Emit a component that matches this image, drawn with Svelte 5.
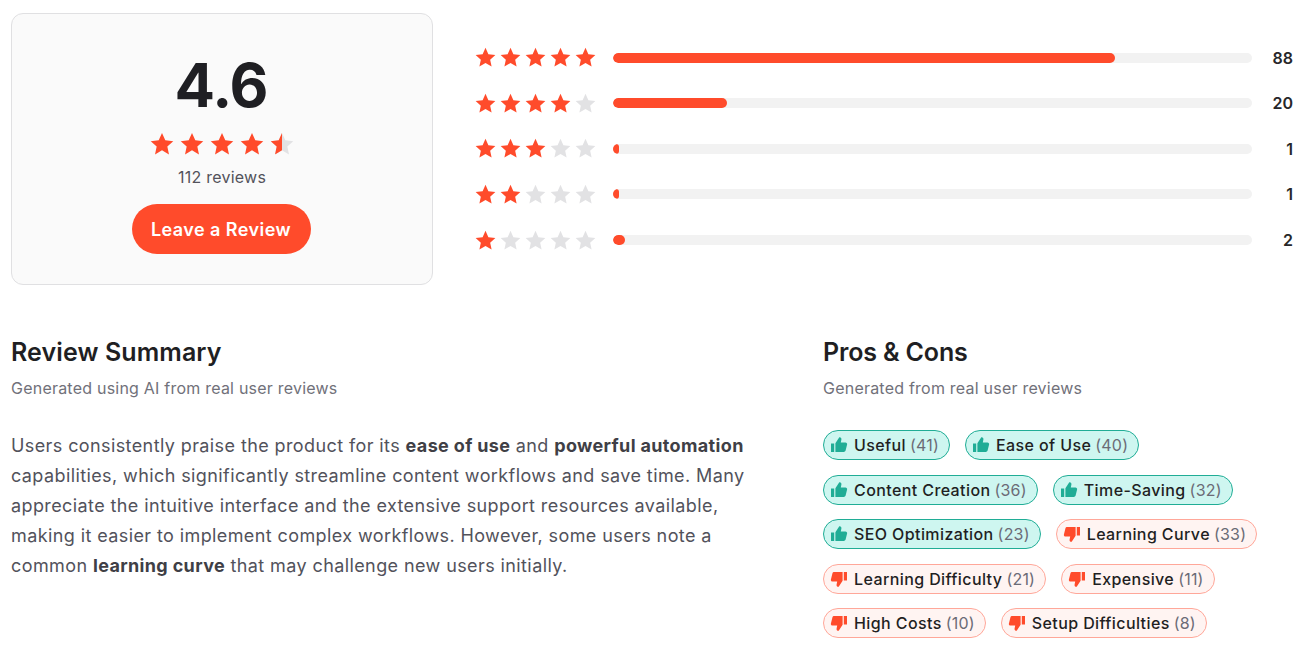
<script>
    const starPath = 'M10 0.8l2.75 6.1 6.65.72-4.96 4.48 1.38 6.55L10 15.3l-5.82 3.35 1.38-6.55L.6 7.62l6.65-.72z';

    const rows = [
        { stars: 5, pct: 78.6, count: 88 },
        { stars: 4, pct: 17.9, count: 20 },
        { stars: 3, pct: 0.9, count: 1 },
        { stars: 2, pct: 0.9, count: 1 },
        { stars: 1, pct: 1.8, count: 2 }
    ];

    const tags = [
        { label: 'Useful', count: 41, pro: true },
        { label: 'Ease of Use', count: 40, pro: true },
        { label: 'Content Creation', count: 36, pro: true },
        { label: 'Time-Saving', count: 32, pro: true },
        { label: 'SEO Optimization', count: 23, pro: true },
        { label: 'Learning Curve', count: 33, pro: false },
        { label: 'Learning Difficulty', count: 21, pro: false },
        { label: 'Expensive', count: 11, pro: false },
        { label: 'High Costs', count: 10, pro: false },
        { label: 'Setup Difficulties', count: 8, pro: false }
    ];
</script>

<div class="page">
    <div class="top">
        <div class="score-card">
            <div class="score">4.6</div>
            <div class="score-stars">
                {#each [0, 1, 2, 3] as i (i)}
                    <svg class="big-star" viewBox="0 0 20 20"><path d={starPath} fill="#ff4b2b" /></svg>
                {/each}
                <svg class="big-star" viewBox="0 0 20 20">
                    <path d={starPath} fill="#e2e2e4" />
                    <path d={starPath} fill="#ff4b2b" style="clip-path: inset(0 50% 0 0)" />
                </svg>
            </div>
            <div class="review-count">112 reviews</div>
            <button class="review-btn">Leave a Review</button>
        </div>

        <div class="breakdown">
            {#each rows as row}
                <div class="row">
                    <div class="row-stars">
                        {#each [1, 2, 3, 4, 5] as n}
                            <svg class="small-star" viewBox="0 0 20 20">
                                <path d={starPath} fill={n <= row.stars ? '#ff4b2b' : '#e2e2e4'} />
                            </svg>
                        {/each}
                    </div>
                    <div class="track"><div class="fill" style="width: {row.pct}%"></div></div>
                    <div class="count">{row.count}</div>
                </div>
            {/each}
        </div>
    </div>

    <div class="bottom">
        <div class="summary">
            <h2>Review Summary</h2>
            <p class="sub">Generated using AI from real user reviews</p>
            <p class="body">
                Users consistently praise the product for its <b>ease of use</b> and <b>powerful automation</b>
                capabilities, which significantly streamline content workflows and save time. Many
                appreciate the intuitive interface and the extensive support resources available,
                making it easier to implement complex workflows. However, some users note a
                common <b>learning curve</b> that may challenge new users initially.
            </p>
        </div>
        <div class="pros">
            <h2>Pros &amp; Cons</h2>
            <p class="sub">Generated from real user reviews</p>
            <div class="tags">
                {#each tags as tag}
                    <span class="tag" class:pro={tag.pro} class:con={!tag.pro}>
                        <svg class="thumb" class:down={!tag.pro} viewBox="0 0 18 18">
                            <path d="M1 7.5h3.2V16H1zM5.4 7.3 9.3 1.2c1.5-.2 2.4.9 2.1 2.3l-.6 2.9h4.6c1.2 0 2 1 1.7 2.2l-1.5 6c-.2.9-1 1.4-1.9 1.4H5.4z" />
                        </svg>
                        <span class="tag-label">{tag.label}</span>
                        <span class="tag-count">({tag.count})</span>
                    </span>
                {/each}
            </div>
        </div>
    </div>
</div>

<style>
    :global(body) {
        background: #fff;
        font-family: 'Inter', 'Noto Sans', sans-serif;
        color: #1f1f23;
    }

    .page {
        padding: 13px 19px 0 11px;
        box-sizing: border-box;
        width: 1312px;
    }

    .top {
        display: flex;
        gap: 43px;
        height: 272px;
    }

    .score-card {
        width: 422px;
        box-sizing: border-box;
        border: 1px solid #e0e0e2;
        border-radius: 12px;
        background: #fafafa;
        display: flex;
        flex-direction: column;
        align-items: center;
        padding-top: 33px;
    }

    .score {
        font-size: 60px;
        line-height: 76px;
        font-weight: 700;
        letter-spacing: -1px;
        margin-left: -2px;
    }

    .score-stars {
        display: flex;
        gap: 6px;
        margin-top: 9px;
    }

    .big-star {
        width: 24px;
        height: 24px;
        display: block;
    }

    .review-count {
        margin-top: 9px;
        font-size: 16px;
        line-height: 24px;
        color: #52525b;
        letter-spacing: 0.25px;
    }

    .review-btn {
        margin: 15px 2px 0 0;
        width: 179px;
        height: 50px;
        border: none;
        border-radius: 25px;
        background: #ff4b2b;
        color: #fff;
        font-family: inherit;
        font-size: 18px;
        font-weight: 600;
        letter-spacing: 0.45px;
        padding: 0;
    }

    .breakdown {
        flex: 1;
        display: flex;
        flex-direction: column;
        padding-top: 31.7px;
        margin-left: -1px;
    }

    .row {
        display: flex;
        align-items: center;
        height: 26px;
        margin-bottom: 19.6px;
    }

    .row-stars {
        display: flex;
        gap: 4px;
    }

    .small-star {
        width: 21px;
        height: 21px;
        display: block;
    }

    .track {
        margin-left: 17px;
        width: 639px;
        height: 10px;
        border-radius: 5px;
        background: #f2f2f2;
        overflow: hidden;
    }

    .fill {
        height: 100%;
        min-width: 6px;
        border-radius: 5px;
        background: #ff4b2b;
    }

    .count {
        flex: 1;
        text-align: right;
        font-size: 16px;
        font-weight: 600;
        color: #27272a;
    }

    .bottom {
        display: grid;
        grid-template-columns: 812px 1fr;
        margin-top: 50px;
    }

    h2 {
        margin: 0;
        font-size: 25px;
        line-height: 34px;
        font-weight: 600;
        letter-spacing: 0.1px;
        color: #1f1f23;
    }

    .pros h2 {
        letter-spacing: -0.15px;
    }

    .sub {
        margin: 7px 0 0;
        font-size: 16px;
        line-height: 24px;
        color: #71717a;
        letter-spacing: 0.22px;
    }

    .body {
        margin: 31px 0 0;
        max-width: 745px;
        font-size: 18px;
        line-height: 30px;
        color: #52525b;
        letter-spacing: 0.4px;
    }

    .body b {
        font-weight: 700;
        color: #3f3f46;
        letter-spacing: 0.35px;
    }

    .tags {
        display: flex;
        flex-wrap: wrap;
        gap: 14.6px 15px;
        margin-top: 30px;
    }

    .tag {
        display: inline-flex;
        align-items: center;
        height: 30px;
        box-sizing: border-box;
        padding: 0 10px 0 6px;
        border-radius: 15px;
        border: 1px solid;
        font-size: 16px;
        white-space: nowrap;
    }

    .tag.pro {
        background: #cef6f0;
        border-color: #20ad96;
    }

    .tag.con {
        background: #fff4f2;
        border-color: #ffa799;
    }

    .thumb {
        width: 18px;
        height: 18px;
        margin-right: 6px;
        flex: none;
    }

    .thumb path {
        fill: #20ad96;
    }

    .thumb.down {
        transform: rotate(180deg);
    }

    .thumb.down path {
        fill: #ff4b2b;
    }

    .tag-label {
        font-weight: 500;
        color: #1f1f23;
        letter-spacing: 0.4px;
    }

    .tag-count {
        margin-left: 4px;
        color: #6b6b76;
        letter-spacing: 0.2px;
    }
</style>
